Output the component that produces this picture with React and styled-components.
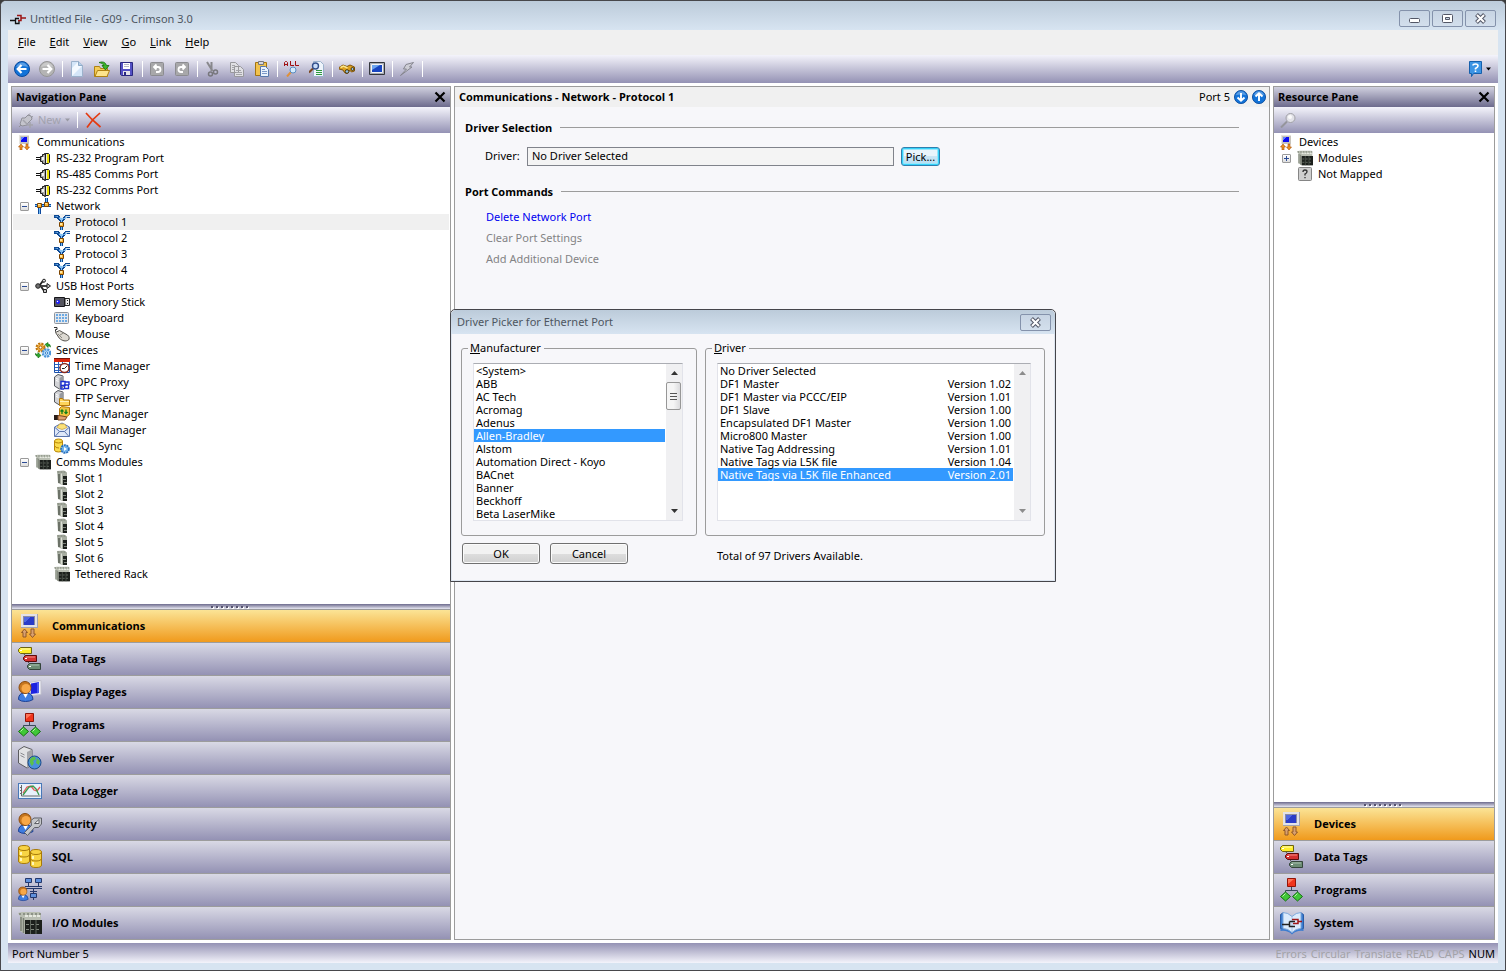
import React, { useState } from 'react';
import styled, { createGlobalStyle, css } from 'styled-components';

const GlobalStyle = createGlobalStyle`
  * {
    box-sizing: border-box;
  }

  body {
    margin: 0;
    background: #3c3c3c;
    color: #000;
    font-family: 'Noto Sans', 'Open Sans', sans-serif;
    font-size: 11px;
    line-height: 16px;
  }

  button,
  input {
    font: inherit;
    color: inherit;
  }

  svg {
    display: block;
    flex: none;
  }
`;

const barGradient = 'linear-gradient(#f4f4fb, #9492b4)';

const boldText = css`
  font-family: 'Open Sans', 'Noto Sans', sans-serif;
  font-size: 11px;
  font-weight: 700;
`;

/* ---------- window frame ---------- */

const Window = styled.div`
  position: relative;
  display: flex;
  flex-direction: column;
  min-height: 100vh;
  padding: 0 7px 7px;
  border: 1px solid #47474b;
  border-radius: 6px 6px 0 0;
  background: #d7e4f1;
`;

const TitleBar = styled.header`
  display: flex;
  align-items: center;
  height: ${(p) => p.$height}px;
  margin: ${(p) => (p.$main ? '0 -7px' : '0')};
  padding: ${(p) => (p.$main ? '6px 9px 0' : '0 4px 0 6px')};
  gap: 4px;
  border-radius: 5px 5px 0 0;
  background: linear-gradient(#bccbda, #d7e4f1);
  color: #4d5661;
`;

const WindowTitle = styled.h1`
  flex: 1;
  margin: 0;
  font-size: 11px;
  font-weight: 400;
`;

const CaptionButtons = styled.div`
  display: flex;
  gap: 2px;
`;

const CaptionButton = styled.button`
  display: flex;
  align-items: center;
  justify-content: center;
  width: 31px;
  height: 17px;
  padding: 0;
  border: 1px solid #8492ab;
  border-radius: 2px;
  background: linear-gradient(#c7d4e3, #d3dfec);
`;

const MenuBar = styled.nav`
  display: flex;
  align-items: center;
  height: 25px;
  padding: 0 0 2px 3px;
  background: #f0f0f0;
`;

const MenuItem = styled.button`
  padding: 0 7px;
  border: 0;
  background: none;

  &::first-letter {
    text-decoration: underline;
  }
`;

const Toolbar = styled.div`
  display: flex;
  align-items: center;
  height: 28px;
  padding: 0 7px 0 2px;
  background: ${barGradient};
`;

const ToolButton = styled.button`
  width: 25px;
  padding: 4px;
  border: 0;
  background: none;
`;

const ToolSeparator = styled.span`
  width: 1px;
  height: 16px;
  margin: 0 2px;
  background: #fff;
`;

const HelpButton = styled.button`
  display: flex;
  align-items: center;
  gap: 2px;
  margin-left: auto;
  padding: 0;
  border: 0;
  background: none;
`;

const Workspace = styled.main`
  flex: 1;
  display: grid;
  grid-template-columns: 440px minmax(0, 1fr) 222px;
  gap: 3px;
  padding: 3px;
  background: #fff;
`;

const StatusBar = styled.footer`
  display: flex;
  align-items: center;
  height: 20px;
  gap: 4px;
  padding: 2px 3px 0 4px;
  background: linear-gradient(#9492b4, #f4f4fb);
`;

const StatusText = styled.span`
  flex: 1;
`;

const StatusFlag = styled.span`
  color: ${(p) => (p.$on ? '#000' : '#a3a3a8')};
`;

/* ---------- panes ---------- */

const Pane = styled.section`
  display: flex;
  flex-direction: column;
  border: 1px solid #9c9c9c;
  background: #fff;
`;

const PaneHeader = styled.div`
  display: flex;
  align-items: center;
  justify-content: space-between;
  height: 20px;
  padding: 0 4px;
  background: linear-gradient(#d0d0df, #6d6b8d);
`;

const PaneTitle = styled.h2`
  margin: 0;
  ${boldText}
`;

const IconButton = styled.button`
  padding: 0;
  border: 0;
  background: none;
`;

const PaneToolbar = styled.div`
  display: flex;
  align-items: center;
  height: 26px;
  padding: 0 6px;
  gap: 5px;
  background: ${barGradient};
`;

const NewButton = styled.button`
  display: flex;
  align-items: center;
  gap: 4px;
  padding: 0;
  border: 0;
  background: none;

  &:disabled {
    color: #a2a2ae;
  }
`;

const Tree = styled.ul`
  flex: 1;
  margin: 0;
  padding: 1px 1px 0;
  list-style: none;
`;

const TreeRow = styled.li`
  display: flex;
  align-items: center;
  height: 16px;
  padding-left: ${(p) => p.$level * 19 + 3}px;
  background: ${(p) => (p.$selected ? '#f0f0f0' : 'none')};
`;

const TreeLabel = styled.span`
  margin-left: 5px;
`;

const Expander = styled.button`
  width: 9px;
  height: 9px;
  margin: 0 6px 0 -15px;
  padding: 1px;
  border: 1px solid #9a9a9a;
  border-radius: 1px;
  background: linear-gradient(#fff, #ddd);
`;

const Splitter = styled.div`
  display: flex;
  align-items: center;
  justify-content: center;
  gap: 3px;
  height: 5px;
  padding-right: 4px;
  background: linear-gradient(#6d6b8d, #e8e8f2);
`;

const Grip = styled.i`
  width: 2px;
  height: 2px;
  background: #55536f;
  box-shadow: 1px 1px 0 #fff;
`;

const CategoryButton = styled.button`
  display: flex;
  align-items: center;
  gap: 10px;
  height: 33px;
  padding: 0 6px;
  border: 0;
  border-top: 1px solid #9c9c9c;
  background: ${(p) =>
    p.$active ? 'linear-gradient(#fbe496, #f09a1c)' : 'linear-gradient(#d9d9e5, #9492b4)'};
  text-align: left;
  ${boldText}
`;

/* ---------- port editor ---------- */

const EditorHeader = styled.div`
  display: flex;
  align-items: center;
  gap: 4px;
  height: 20px;
  padding: 0 3px 0 4px;
  background: #f0f0f0;
`;

const EditorTitle = styled(PaneTitle)`
  flex: 1;
`;

const EditorBody = styled.div`
  flex: 1;
  padding: 13px 30px 0 10px;
  background: #f7f7fa;
`;

const SectionTitle = styled.h3`
  display: flex;
  align-items: center;
  gap: 8px;
  margin: 0;
  ${boldText}

  &::after {
    content: '';
    flex: 1;
    height: 1px;
    margin-bottom: 2px;
    background: #9c9c9c;
  }
`;

const DriverRow = styled.div`
  display: flex;
  align-items: center;
  margin: 11px 0 18px;
  padding-left: 20px;
`;

const DriverLabel = styled.label`
  width: 42px;
  padding-bottom: 2px;
`;

const DriverInput = styled.input`
  width: 367px;
  height: 19px;
  margin-right: 7px;
  padding: 0 4px 2px;
  border: 1px solid #80838b;
  background: #f4f4f4;
`;

const PickButton = styled.button`
  width: 39px;
  height: 19px;
  padding: 0;
  border: 1px solid #2f7fae;
  border-radius: 3px;
  box-shadow: inset 0 0 0 1px #35d3fa, inset 0 0 0 2px #9be6fb;
  background: linear-gradient(#e9f5fc 50%, #cbe6f5 50%, #b4ddf2);
`;

const Commands = styled.div`
  display: flex;
  flex-direction: column;
  align-items: flex-start;
  gap: 5px;
  padding: 9px 0 0 21px;
`;

const CommandLink = styled.a`
  color: ${(p) => (p.$disabled ? '#838385' : '#0000f0')};
  text-decoration: none;
`;

/* ---------- driver picker ---------- */

const Dialog = styled.div`
  position: absolute;
  top: 308px;
  left: calc(50% - 303px);
  width: 606px;
  border: 1px solid #45454a;
  border-radius: 5px 5px 0 0;
  background: #f7f7fa;
`;

const DialogBody = styled.div`
  display: grid;
  grid-template-columns: 236px minmax(0, 1fr);
  gap: 7px 8px;
  padding: 6px 9px 16px;
  border: 1px solid #dfe7f1;
  border-top: 0;
`;

const Group = styled.fieldset`
  min-width: 0;
  margin: 0;
  padding: 0 0 14px;
  border: 1px solid #9c9c9c;
  border-radius: 3px;
`;

const Legend = styled.legend`
  margin-left: 6px;
  padding: 0 3px 0 2px;

  &::first-letter {
    text-decoration: underline;
  }
`;

const ListFrame = styled.div`
  display: flex;
  height: 158px;
  margin: 7px 13px 0 11px;
  border: 1px solid #e2e3ea;
  border-top-color: #abadb3;
  background: #fff;
`;

const List = styled.ul`
  flex: 1;
  margin: 0;
  padding: 0;
  overflow: hidden;
  list-style: none;
  line-height: 13px;
`;

const Option = styled.li`
  display: flex;
  justify-content: space-between;
  padding: 0 2px;
  cursor: default;
  ${(p) =>
    p.$selected &&
    css`
      background: #3399ff;
      color: #fff;
    `}
`;

const ScrollBar = styled.div`
  display: flex;
  flex-direction: column;
  width: 16px;
  margin-left: 1px;
  background: #f0f0f2;
`;

const ScrollArrow = styled.button`
  display: flex;
  align-items: center;
  justify-content: center;
  height: 18px;
  padding: 0;
  border: 0;
  background: none;
`;

const ScrollTrack = styled.div`
  flex: 1;
`;

const Thumb = styled.div`
  display: flex;
  align-items: center;
  justify-content: center;
  height: 28px;
  margin: 0 1px 0 0;
  border: 1px solid #979797;
  border-radius: 2px;
  background: linear-gradient(90deg, #f5f5f5 50%, #dcdcde);
`;

const DialogActions = styled.div`
  display: flex;
  gap: 10px;
  padding-left: 1px;
`;

const DialogButton = styled.button`
  width: 78px;
  height: 21px;
  padding: 0;
  border: 1px solid #707070;
  border-radius: 3px;
  box-shadow: inset 0 0 0 1px #fbfbfb;
  background: linear-gradient(#f2f2f2 50%, #dedede 50%, #d0d0d0);
`;

const DriverCount = styled.p`
  margin: 5px 0 0 12px;
`;

/* ---------- icons ---------- */

const Icon = ({ size = 16, w, h, box, children }) => (
  <svg
    width={w || size}
    height={h || size}
    viewBox={box || `0 0 ${w || size} ${h || size}`}
    aria-hidden='true'
  >
    {children}
  </svg>
);

const CommIcon = () => (
  <Icon>
    <path d='M3 1h10v9H3z' fill='#c8c4bc' />
    <path d='M3 1h10v1H4v8H3z' fill='#e6e4de' />
    <path d='M5 3h6v5H5z' fill='#0c0cf0' />
    <path d='M5 3h3v1H7v1H6v1H5z' fill='#6482ff' />
    <path d='M5 10l2.500 3H6v3H4v-3H2.500zM11 16l-2.500-3H10v-3h2v3h1.500z' fill='#ee9020' stroke='#a8500c' strokeWidth='.6' />
  </Icon>
);

const SerialIcon = () => (
  <Icon>
    <path d='M1 7.500h5M1 9.500h5' stroke='#111' />
    <path d='M5.500 6.500h2v-2h2v-1h1v11h-1v-1h-2v-2h-2z' fill='#a9a9a9' stroke='#1c1c1c' />
    <path d='M7 7h2v3H7z' fill='#f4f4f4' />
    <path d='M10.500 3.500h3l1 1v8l-1 1h-3z' fill='#e8e8e8' stroke='#1c1c1c' />
    <path d='M12 4h2v9h-2z' fill='#ece000' />
  </Icon>
);

const NetworkIcon = () => (
  <Icon>
    <path d='M0 7.500h16M4.500 9v7M11.500 0v6' stroke='#0c489c' strokeWidth='3' />
    <path d='M0 7.500h16M4.500 9v7M11.500 0v6' stroke='#74baf4' strokeWidth='1' />
    <path d='M2.500 5.500h4v4h-4zM9.500 4.500h4v4h-4z' fill='#fcb83c' stroke='#7c4400' />
    <path d='M3 6h2v1H3zM10 5h2v1h-2z' fill='#ffe9a8' />
  </Icon>
);

const ProtocolIcon = () => (
  <Icon>
    <path d='M0 1h5v1h1v2h1v1h2V3h1V2h1V1h5v3h-4v1h-1v1h-1v1H9v2H6V7H5V6H4V5H3V4H0z' fill='#0c4894' />
    <path d='M0 2h4v1h1v2h1v1h1v2h1V6h1V5h1V4h1V3h1V2h4v1h-3v1h-1v1' fill='#86c2f4' />
    <path d='M11 2h5v1h-4z' fill='#d4e4f0' />
    <path d='M6 13h3v3H6z' fill='#0c4894' />
    <path d='M7 13h1v3H7z' fill='#74baf4' />
    <path d='M5.500 8.500h4v4h-4z' fill='#fcb83c' stroke='#7c4400' />
    <path d='M6 9h2v2H6z' fill='#ffe9a8' />
  </Icon>
);

const UsbIcon = () => (
  <Icon>
    <path d='M3 8h10M4.500 7.500l3-4H9M6 8.500l2.500 3.500h2' fill='none' stroke='#222' strokeWidth='1.800' />
    <path d='M4 8h8' stroke='#999' strokeWidth='.6' />
    <circle cx='3' cy='8' r='2.300' fill='#707070' stroke='#222' />
    <circle cx='9' cy='2.700' r='1.500' fill='#ddd' stroke='#222' />
    <path d='M12 5.500L15.500 8 12 10.500zM8.500 11.500h3v3h-3z' fill='#c4c4c4' stroke='#222' />
  </Icon>
);

const MemoryIcon = () => (
  <Icon>
    <path d='M.5 3.500h10v9H.5z' fill='#55555e' stroke='#16161a' />
    <path d='M11 4.500h4.500v7H11z' fill='#eee' stroke='#222' />
    <path d='M13 6h1v1h-1zM13 9h1v1h-1z' fill='#222' />
    <circle cx='4' cy='8' r='2' fill='#1b1bff' />
    <circle cx='3.500' cy='7.500' r='.7' fill='#fff' />
  </Icon>
);

const KeyboardIcon = () => (
  <Icon>
    <rect x='.5' y='2.500' width='14' height='11' rx='1' fill='#e4e7ec' stroke='#8e959e' />
    <path d='M2 5h11M2 8h11M2 11h11' stroke='#6caae4' strokeWidth='2' strokeDasharray='2 1' />
  </Icon>
);

const MouseIcon = () => (
  <Icon>
    <path d='M0 1.500h3v2H1.500v2l2 2' fill='none' stroke='#333' />
    <path d='M1.500 6.500l4-2 8 4.500c2 1.500 2 4 1 5-3 1.800-6 .8-9-1.500z' fill='#dcd9d2' stroke='#55534e' />
    <path d='M6 9l3.500-2M4 8l4 4' stroke='#8b8982' />
  </Icon>
);

const GearsIcon = () => (
  <Icon>
    <circle cx='5.500' cy='5.500' r='3.500' fill='#f6c35c' stroke='#c0760e' strokeWidth='3' strokeDasharray='2 .8' />
    <circle cx='5.500' cy='5.500' r='3' fill='#f2b040' />
    <circle cx='5.500' cy='5.500' r='1.500' fill='#fff' stroke='#a8600c' />
    <circle cx='11.500' cy='11' r='3.500' fill='#a8d4f8' stroke='#4c94d8' strokeWidth='2.600' strokeDasharray='2 .8' />
    <circle cx='11.500' cy='11' r='2.500' fill='#bce0fc' />
    <circle cx='11.500' cy='11' r='1.200' fill='#fff' stroke='#3b82c8' />
    <path d='M10 2.500l3-2v1.500q2.500 0 2.500 3-1-1.500-2.500-1v1.500zM6 13.500l-3 2.500v-1.500Q.5 14 0 11.500q1.500 1 3 .5v-1.500z' fill='#2ea52e' stroke='#0b6a0b' strokeWidth='.6' />
  </Icon>
);

const TimeIcon = () => (
  <Icon>
    <path d='M.5 1.500h15v13H.5z' fill='#fff' stroke='#1a4fa8' />
    <path d='M1 6.500h14M1 9.500h14M1 12.500h14M4.500 4v10M8.500 4v10' stroke='#2a62c0' />
    <path d='M0 0h16v4H0z' fill='#d8260e' />
    <path d='M0 0h16v1H0z' fill='#7c1408' />
    <circle cx='10.500' cy='10' r='4.500' fill='#fff' stroke='#8c2a1c' strokeWidth='1.400' />
    <path d='M10.500 10.500L13 8M10.500 10.500H8' fill='none' stroke='#222' />
  </Icon>
);

const ServerShape = () => (
  <>
    <path d='M.5 3L4 .5l5 1.500v11l-3.500 2L.5 12z' fill='#d2d3d6' stroke='#55575c' />
    <path d='M5.500 4L9 2v11l-3.500 2z' fill='#96999f' />
    <path d='M2 4.500l2.500.8M2 6.500l2.500.8' stroke='#fff' />
  </>
);

const OpcIcon = () => (
  <Icon>
    <ServerShape />
    <path d='M7 7.500h4v4H7zM10.500 11h4v3.500h-4z' fill='#fff' stroke='#1c2fd0' strokeWidth='1.400' />
    <path d='M11 8h4v3M7 12v3h3' fill='none' stroke='#1c2fd0' strokeWidth='1.400' />
  </Icon>
);

const FtpIcon = () => (
  <Icon>
    <ServerShape />
    <path d='M5.500 8.500h3l1 1.500h6v5.500h-10z' fill='#ffd45a' stroke='#b4780c' />
    <path d='M6 11.500h9' stroke='#fff0b8' />
  </Icon>
);

const SyncIcon = () => (
  <Icon>
    <path d='M5.500 2.500l2-2 8 1v7l-3 2.500h-7z' fill='#f2c440' stroke='#b4760c' />
    <path d='M8 8V4M6.500 5.500L8 4l1.500 1.500M12 3.500v4M10.500 6l1.500 1.500L13.500 6' fill='none' stroke='#11801a' strokeWidth='1.300' />
    <path d='M0 9h4v5H0z' fill='#2a1c18' />
    <path d='M4 9.500l4 .5 5 1-2 3H4z' fill='#e0a070' stroke='#7d4a22' />
  </Icon>
);

const MailIcon = () => (
  <Icon>
    <path d='M.5 5L8 1l7.500 4v9.500H.5z' fill='#dfe8f8' stroke='#5a75ad' />
    <path d='M3 5.500L5.500 2h5L13 5.500l-5 2z' fill='#fbe27a' stroke='#caa036' strokeWidth='.7' />
    <path d='M1 5.500l4.500 4h5l4.500-4M1 14.500l4.500-5M15 14.500l-4.500-5' fill='none' stroke='#5a75ad' />
  </Icon>
);

const SqlSyncIcon = () => (
  <Icon>
    <path d='M.5 3q0-2 4-2t4 2v9q0 2-4 2t-4-2z' fill='#fadb4c' stroke='#b98608' />
    <path d='M.5 3q0 2 4 2t4-2M1 8q0 2 4 2' fill='none' stroke='#b98608' />
    <circle cx='11' cy='11' r='3.800' fill='#8cc4f4' stroke='#2a70bc' strokeWidth='2' strokeDasharray='2 .7' />
    <circle cx='11' cy='11' r='3' fill='#6cb0ec' />
    <path d='M10 9l3 2-3 2z' fill='#fff' />
  </Icon>
);

const RackIcon = ({ size = 16 }) => (
  <Icon w={size} h={size} box='0 0 24 24'>
    <path d='M0 2l4-1 18 0 1 4v18H7l-5-3V5z' fill='#b9beb2' />
    <path d='M1 3h22' stroke='#8c9286' strokeWidth='2' strokeDasharray='2 2' />
    <path d='M3 6v14M5.500 7v15' stroke='#7c8276' strokeWidth='1.500' />
    <path d='M7 5h16' stroke='#e6e9e0' strokeWidth='2' strokeDasharray='3 1' />
    <path d='M7 9h17v14H7z' fill='#1c201c' />
    <path d='M8 13.500h15M8 18.500h15' stroke='#7e867c' strokeDasharray='3 2' />
    <path d='M12.500 9v14M18 9v14' stroke='#5c645a' />
  </Icon>
);

const SlotIcon = () => (
  <Icon>
    <path d='M3 1l7-.5 3 2V15H8l-4-2z' fill='#a8aea2' />
    <path d='M3.500 2h8' stroke='#7c8276' strokeDasharray='2 1' />
    <path d='M5 4v9' stroke='#6c7268' strokeWidth='2' />
    <path d='M7.500 3.500v11' stroke='#dcdfd6' />
    <path d='M9 6h4v9H9z' fill='#1c201c' />
    <path d='M9 9.500h3M10 12.500h3' stroke='#7e847c' />
  </Icon>
);

const UnknownIcon = () => (
  <Icon>
    <rect x='1.500' y='1.500' width='13' height='13' rx='1' fill='#cfcfcf' stroke='#858585' />
    <path d='M6 6q0-2 2-2t2 1.700Q10 7 8 8v1.500M8 11v1.300' fill='none' stroke='#333' strokeWidth='1.300' />
  </Icon>
);

const BigCommIcon = () => (
  <Icon size={24}>
    <path d='M3 0h17v14H3z' fill='#a4a4ae' />
    <path d='M3 0h16v13H3z' fill='#e2e2e8' />
    <path d='M5 2h12v9H5z' fill='#8c8ca0' />
    <path d='M6 3h10v8H6z' fill='#2a3cc8' />
    <path d='M6 3h6v1h-1v1h-1v1H9v1H8v1H6z' fill='#5068e0' />
    <path d='M6.500 15l3 3.500H8V23H5v-4.500H3.500zM14.500 23.500l-3-3.500H13v-5h3v5h1.500z' fill='#d8a070' stroke='#905828' />
  </Icon>
);

const TagsIcon = () => (
  <Icon size={24}>
    <path d='M3 3.500l5 6M8 12.500l5 6' stroke='#555' />
    <path d='M.5 2.500l2-2h11v6h-11l-2-2z' fill='#ffee2a' stroke='#6c6410' />
    <path d='M5.500 10.500l2-2h11v6h-11l-2-2z' fill='#d43030' stroke='#5c0c0c' />
    <path d='M9.500 18.500l2-2h11v6h-11l-2-2z' fill='#6c8c74' stroke='#34443a' />
    <path d='M3 2h9' stroke='#fffbc0' />
    <path d='M8 10h9' stroke='#f48c84' />
    <path d='M12 18h9' stroke='#a8c0ae' />
    <path d='M2 3h2v1H2zM7 11h2v1H7zM11 19h2v1h-2z' fill='#fff' />
  </Icon>
);

const PersonShape = () => (
  <>
    <path d='M.5 19.500q0-6 5-6.500h4q5 .5 5.500 6.500-3 2-7.500 2t-7-2z' fill='#3f7de0' stroke='#1a3f94' />
    <path d='M5 13.500l2.500 4.500 2.500-4.500z' fill='#fff' />
    <circle cx='7' cy='7.500' r='6' fill='#c87820' stroke='#8c4a0c' />
    <circle cx='8' cy='8.500' r='4.500' fill='#f8a848' />
  </>
);

const DisplayIcon = () => (
  <Icon size={24}>
    <path d='M11 2.500l12-2v14l-10 1z' fill='#f2f2f8' stroke='#c0c0cc' />
    <path d='M13 3.500l8-1.500v11l-8 1z' fill='#1c22e0' />
    <path d='M19 3l2-1v11l-2 .3z' fill='#4a58f0' />
    <PersonShape />
  </Icon>
);

const ProgramsIcon = () => (
  <Icon size={24}>
    <path d='M11.500 9v3.500M5.500 16v-3.500h12V16' fill='none' stroke='#3c4a5c' />
    <path d='M7.500 .500h8v8h-8z' fill='#f0341c' stroke='#921408' />
    <path d='M8 1h6L8 6z' fill='#ff7458' />
    <path d='M5.500 14l5 4.500-5 4.500-5-4.500zM17.500 14l5 4.500-5 4.500-5-4.500z' fill='#40c838' stroke='#147012' />
    <path d='M5.500 15.500l-3 3M17.500 15.500l-3 3' stroke='#b8f4a8' />
  </Icon>
);

const WebIcon = () => (
  <Icon size={24}>
    <path d='M.5 4L6 .500l8 3V19l-5 3-8.500-5z' fill='#e2e2e4' stroke='#5c5c60' />
    <path d='M9 6l5-2.500V19l-5 3z' fill='#a4a4a8' />
    <path d='M2.500 7l4 2M2.500 9.500l4 2' stroke='#8b8b90' />
    <circle cx='16.500' cy='16.500' r='6.500' fill='#4a90dc' stroke='#1a4c88' />
    <path d='M12 13q3-3 5-2l1 2-3 2 1 2-2 3q-3-3-2-7zM19 12l3 3-1 4-3-2z' fill='#5cc04a' />
  </Icon>
);

const LoggerIcon = () => (
  <Icon size={24}>
    <rect x='.5' y='4.500' width='23' height='15' fill='#e8f1fc' stroke='#4878b8' />
    <path d='M3.500 6v11h19M2 8.500h2M2 11.500h2M2 14.500h2' stroke='#666' fill='none' />
    <path d='M5 14l4-6 4-1 3 4 3 1 3-4' fill='none' stroke='#e45858' strokeWidth='1.300' />
    <path d='M5 16l3-4 3-4 4-1 3 3 3 6' fill='none' stroke='#3a9a4c' strokeWidth='1.300' />
  </Icon>
);

const SecurityIcon = () => (
  <Icon size={24}>
    <PersonShape />
    <path d='M6.500 20.500l7-7-.5-5 3-2.500h7.500v6l-3 3.500h-4l-7 8z' fill='#c4c6ca' stroke='#5e6066' />
    <path d='M16.500 11.500l4.500-4v4z' fill='#f8f8f8' stroke='#5e6066' />
  </Icon>
);

const SqlIcon = () => (
  <Icon size={24}>
    {[[0, 0], [12, 4]].map(([x, y]) => (
      <g key={x} transform={`translate(${x} ${y})`}>
        <path d='M.5 3q0-2.500 5.500-2.500T11.500 3v13q0 2.500-5.500 2.500T.5 16z' fill='#f8d444' stroke='#a87a08' />
        <path d='M.5 3Q1 5.500 6 5.500T11.500 3M.5 9.500Q1 12 6 12t5.500-2.500' fill='none' stroke='#a87a08' />
        <path d='M3 7v3M3 13v3' stroke='#fff6b8' strokeWidth='2' />
      </g>
    ))}
  </Icon>
);

const ControlIcon = () => (
  <Icon size={24}>
    <path d='M7.500 .500h6v4h-6zM17.500 .500h6v4h-6zM12.500 15.500h6v4h-6z' fill='#5f90dc' stroke='#24386c' />
    <path d='M10.500 5v3M20.500 5v3M7 8.500h17M7 10.500h17M15.500 11v4M12 13.500h7M15.500 20v2' stroke='#24386c' fill='none' />
    <g transform='translate(0 8) scale(.68)'>
      <PersonShape />
    </g>
  </Icon>
);

const SystemIcon = () => (
  <Icon size={24}>
    <path d='M.5 3.500l3-2v17l-3-1zM23.500 3.500l-3-2v17l3-1z' fill='#3c7cd0' stroke='#2a5ca4' />
    <path d='M.5 18q7-1 11.500 4 4.500-5 11.500-4v2q-7-1-11.500 3.500Q7.500 19 .5 20z' fill='#3c7cd0' />
    <path d='M3 1.500q5 0 9 4 4-4 9-4v16q-5 0-9 4-4-4-9-4z' fill='#dcebfc' stroke='#7ca8dc' />
    <path d='M12 6v15' stroke='#a8c8ec' />
    <path d='M2 13.500h7M9.500 10.500H15M9.500 10.500v5H15' fill='none' stroke='#222' strokeWidth='1.500' />
    <path d='M12 8.500h6v4h-5M18 10.500h4' fill='none' stroke='#a01818' strokeWidth='1.500' />
  </Icon>
);

const CrimsonLogo = () => (
  <Icon>
    <path d='M0 9.500h5M9 7.500H5.500v5H9V9.500' fill='none' stroke='#111' strokeWidth='1.300' />
    <path d='M7 4.500h4v5H8M11 7h5' fill='none' stroke='#9c1414' strokeWidth='1.500' />
  </Icon>
);

const ArrowDisc = ({ size = 16, turn = 0, off }) => (
  <Icon w={size} h={size} box='0 0 16 16'>
    <circle cx='8' cy='8' r='7.500' fill={off ? '#b4b4b4' : '#1373d8'} stroke={off ? '#969696' : '#0a4a9c'} />
    <path d='M2 6q2-4.500 6-4.500T14 6q-6-2-12 0z' fill='#fff' opacity='.3' />
    <path
      d='M12.500 8H4M7.500 4L3.700 8l3.800 4'
      fill='none'
      stroke='#fff'
      strokeWidth='2.200'
      transform={`rotate(${turn} 8 8)`}
    />
  </Icon>
);

const NewFileIcon = () => (
  <Icon>
    <path d='M2.500 .500h7l4 4v11h-11z' fill='#d4e5f8' stroke='#9cb2cc' />
    <path d='M3 15V7l6-6v4h4z' fill='#f4f9ff' />
    <path d='M9.500 .500v4h4' fill='#b4cee8' stroke='#8fa9c6' />
  </Icon>
);

const OpenIcon = () => (
  <Icon>
    <path d='M.5 5.500h5l1 2h7v8H.5z' fill='#f4cc58' stroke='#b08212' />
    <path d='M1 15.500l2.500-6h12l-2.500 6z' fill='#fde48c' stroke='#b08212' />
    <path d='M5 1.500q6-2 7.500 3h2.500L11.500 9 8 4.500h2Q9 2 5 1.500z' fill='#3db52c' stroke='#14700c' strokeWidth='.8' />
  </Icon>
);

const SaveIcon = () => (
  <Icon>
    <path d='M1.500 1.500h12v13h-11l-1-1z' fill='#5350c4' stroke='#2a2880' />
    <path d='M4 2h7v6H4z' fill='#fff' />
    <path d='M5 3.500h5M5 5.500h5' stroke='#b4b4c4' />
    <path d='M4 10h7v4H4z' fill='#e4e4ea' />
    <path d='M5 11h2v3H5z' fill='#2a2880' />
  </Icon>
);

const UndoIcon = ({ flip }) => (
  <Icon>
    <rect x='1.500' y='1.500' width='13' height='13' rx='1' fill='#a8a8aa' stroke='#8c8c90' />
    <path
      d='M5 6h4q2.500 0 2.500 2.500T9 11H7M7.500 3.500L5 6l2.500 2.500'
      fill='none'
      stroke='#fff'
      strokeWidth='1.800'
      transform={flip ? 'translate(16 0) scale(-1 1)' : undefined}
    />
  </Icon>
);

const CutIcon = () => (
  <Icon>
    <path d='M3 1l5.500 9M7.500 1v9' stroke='#88888c' strokeWidth='2' />
    <circle cx='6.500' cy='13' r='2' fill='none' stroke='#77777c' strokeWidth='1.500' />
    <circle cx='11.500' cy='11' r='2' fill='none' stroke='#77777c' strokeWidth='1.500' />
  </Icon>
);

const CopyIcon = () => (
  <Icon>
    <path d='M1.500 1.500h5l3 3v7h-8zM5.500 5.500h6l3 3v7h-9z' fill='#e0e0e4' stroke='#98989c' />
    <path d='M3 4.500h3M3 6.500h2M3 8.500h2M7 9.500h5M7 11.500h6M7 13.500h6' stroke='#a4a4a8' />
  </Icon>
);

const PasteIcon = () => (
  <Icon>
    <path d='M1.500 1.500h11v13h-11z' fill='#f2c24c' stroke='#a47410' />
    <path d='M4.500 .500h5v3h-5z' fill='#d8d8de' stroke='#77777c' />
    <path d='M6.500 5.500h5l3 3v7h-8z' fill='#eaf2fc' stroke='#5878ac' />
    <path d='M8 8.500h3M8 10.500h5M8 12.500h5' stroke='#7c98c8' />
  </Icon>
);

const FindAllIcon = () => (
  <Icon>
    <path
      d='M.5 5V1.500l1-1h1l1 1V5M.5 3.500h3M6.500 0v4.500H10M11.500 0v4.500H15'
      fill='none'
      stroke='#a01010'
    />
    <path d='M3 15.500l4-4.500' stroke='#e09038' strokeWidth='2' />
    <circle cx='9' cy='9' r='3' fill='#d4ecfc' stroke='#5a8cc0' />
  </Icon>
);

const FindTextIcon = () => (
  <Icon>
    <path d='M4.500 .500h7l3 3v12h-10z' fill='#eef4fb' stroke='#9cb2cc' />
    <path d='M7 9.500h6M7 11.500h6M7 13.500h6' stroke='#2c9a3c' />
    <path d='M0 11.500l4-4' stroke='#7a4620' strokeWidth='2' />
    <circle cx='6.500' cy='5' r='3' fill='#c8dcf8' stroke='#34508c' strokeWidth='1.400' />
  </Icon>
);

const BinocularsIcon = () => (
  <Icon>
    <path d='M0 6.500L4 4l4 1.500L11 4l4.500 2v4l-3 1-2-2-1 2.500q-2 2-4 0L4 9 0 8z' fill='#dca020' stroke='#80540a' />
    <path d='M1.500 6.500l3-1.500 4 2' fill='none' stroke='#fbe68c' strokeWidth='1.500' />
    <circle cx='8' cy='10.500' r='1.800' fill='#8cc0ec' stroke='#4c3404' />
    <circle cx='13.500' cy='8' r='1.500' fill='#8cc0ec' stroke='#4c3404' />
  </Icon>
);

const ScreenIcon = () => (
  <Icon>
    <path d='M.5 1.500h15v12H.5z' fill='#a8acb4' stroke='#33363c' />
    <path d='M2.500 3.500h11v8h-11z' fill='#1744c0' stroke='#f4f4f4' />
    <path d='M3 4h8l-8 5z' fill='#6ca4f0' />
  </Icon>
);

const BoltIcon = () => (
  <Icon>
    <path d='M7 3.500l7.500-2-4 4.500h2.500L1.500 14.500 7.500 8H4.500z' fill='#ceced6' stroke='#85858e' />
  </Icon>
);

const HelpIcon = () => (
  <Icon>
    <path d='M1.500 .500h12v12h-8l-2 3v-3h-2z' fill='#3c94e4' stroke='#1660ac' />
    <path d='M5 4.500Q5 3 7.500 3T10 5q0 1-2.500 2.500v1M7.500 9.500V11' fill='none' stroke='#fff' strokeWidth='1.600' />
  </Icon>
);

const PlugIcon = () => (
  <Icon>
    <path d='M2 12l2-6 3 0 3-3 3 1 1 3-4 4-1 2-5 1zM1 15l2-2M12 1.500l-2 2M15 4.500l-2 1' fill='#c4c4cc' stroke='#909098' />
    <path d='M5 8l4 4M12 10v6M9 13h6' stroke='#a4a4ac' strokeWidth='1.500' />
  </Icon>
);

const DeleteIcon = () => (
  <Icon>
    <path d='M1 1l6 6.500L15.500 15M15 1L8 7.500 2 15.500' fill='none' stroke='#e43a10' strokeWidth='1.700' />
  </Icon>
);

const SearchIcon = () => (
  <Icon>
    <path d='M1 15.500l6-6' stroke='#95959c' strokeWidth='2' />
    <circle cx='10.500' cy='6' r='4.500' fill='#e2e2e8' stroke='#a0a0a6' />
    <circle cx='10' cy='5' r='2' fill='#fafafa' />
  </Icon>
);

const CloseGlyph = () => (
  <Icon w={12} h={12}>
    <path d='M1.500 1.500l9 9M10.500 1.500l-9 9' stroke='#000' strokeWidth='2.200' />
  </Icon>
);

const Minimize = () => (
  <Icon w={13} h={11}>
    <rect x='1.500' y='5.500' width='10' height='4' rx='1' fill='#fff' stroke='#535766' />
  </Icon>
);

const Maximize = () => (
  <Icon w={13} h={11}>
    <rect x='1.500' y='1.500' width='10' height='8' rx='1' fill='#fff' stroke='#535766' />
    <path d='M4.500 4.500h4v2h-4z' fill='#c7d4e3' stroke='#535766' />
  </Icon>
);

const CloseCaption = () => (
  <Icon w={13} h={11}>
    <path d='M2.500 1.500l8 8M10.500 1.500l-8 8' stroke='#535766' strokeWidth='4' />
    <path d='M3 2l7 7M10 2L3 9' stroke='#fff' strokeWidth='2' />
  </Icon>
);

const Triangle = ({ up, color = '#222', w = 7 }) => (
  <Icon w={w} h={4} box='0 0 7 4'>
    <path d={up ? 'M0 4L3.500 0 7 4z' : 'M0 0h7L3.500 4z'} fill={color} />
  </Icon>
);

/* ---------- data ---------- */

const toolGroups = [
  [
    ['Back', <ArrowDisc />],
    ['Forward', <ArrowDisc turn={180} off />]
  ],
  [
    ['New', <NewFileIcon />],
    ['Open', <OpenIcon />],
    ['Save', <SaveIcon />]
  ],
  [
    ['Undo', <UndoIcon />],
    ['Redo', <UndoIcon flip />]
  ],
  [
    ['Cut', <CutIcon />],
    ['Copy', <CopyIcon />],
    ['Paste', <PasteIcon />]
  ],
  [
    ['Find all', <FindAllIcon />],
    ['Find text', <FindTextIcon />]
  ],
  [['Search', <BinocularsIcon />]],
  [['Display', <ScreenIcon />]],
  [['Download', <BoltIcon />]]
];

const navTree = [
  { level: 0, label: 'Communications', icon: CommIcon },
  { level: 1, label: 'RS-232 Program Port', icon: SerialIcon },
  { level: 1, label: 'RS-485 Comms Port', icon: SerialIcon },
  { level: 1, label: 'RS-232 Comms Port', icon: SerialIcon },
  { level: 1, label: 'Network', icon: NetworkIcon, toggle: '-' },
  { level: 2, label: 'Protocol 1', icon: ProtocolIcon },
  { level: 2, label: 'Protocol 2', icon: ProtocolIcon },
  { level: 2, label: 'Protocol 3', icon: ProtocolIcon },
  { level: 2, label: 'Protocol 4', icon: ProtocolIcon },
  { level: 1, label: 'USB Host Ports', icon: UsbIcon, toggle: '-' },
  { level: 2, label: 'Memory Stick', icon: MemoryIcon },
  { level: 2, label: 'Keyboard', icon: KeyboardIcon },
  { level: 2, label: 'Mouse', icon: MouseIcon },
  { level: 1, label: 'Services', icon: GearsIcon, toggle: '-' },
  { level: 2, label: 'Time Manager', icon: TimeIcon },
  { level: 2, label: 'OPC Proxy', icon: OpcIcon },
  { level: 2, label: 'FTP Server', icon: FtpIcon },
  { level: 2, label: 'Sync Manager', icon: SyncIcon },
  { level: 2, label: 'Mail Manager', icon: MailIcon },
  { level: 2, label: 'SQL Sync', icon: SqlSyncIcon },
  { level: 1, label: 'Comms Modules', icon: RackIcon, toggle: '-' },
  { level: 2, label: 'Slot 1', icon: SlotIcon },
  { level: 2, label: 'Slot 2', icon: SlotIcon },
  { level: 2, label: 'Slot 3', icon: SlotIcon },
  { level: 2, label: 'Slot 4', icon: SlotIcon },
  { level: 2, label: 'Slot 5', icon: SlotIcon },
  { level: 2, label: 'Slot 6', icon: SlotIcon },
  { level: 2, label: 'Tethered Rack', icon: RackIcon }
];

const resourceTree = [
  { level: 0, label: 'Devices', icon: CommIcon },
  { level: 1, label: 'Modules', icon: RackIcon, toggle: '+' },
  { level: 1, label: 'Not Mapped', icon: UnknownIcon }
];

const navCategories = [
  ['Communications', <BigCommIcon />],
  ['Data Tags', <TagsIcon />],
  ['Display Pages', <DisplayIcon />],
  ['Programs', <ProgramsIcon />],
  ['Web Server', <WebIcon />],
  ['Data Logger', <LoggerIcon />],
  ['Security', <SecurityIcon />],
  ['SQL', <SqlIcon />],
  ['Control', <ControlIcon />],
  ['I/O Modules', <RackIcon size={24} />]
];

const resourceCategories = [
  ['Devices', <BigCommIcon />],
  ['Data Tags', <TagsIcon />],
  ['Programs', <ProgramsIcon />],
  ['System', <SystemIcon />]
];

const manufacturers = [
  '<System>',
  'ABB',
  'AC Tech',
  'Acromag',
  'Adenus',
  'Allen-Bradley',
  'Alstom',
  'Automation Direct - Koyo',
  'BACnet',
  'Banner',
  'Beckhoff',
  'Beta LaserMike'
];

const drivers = [
  ['No Driver Selected', ''],
  ['DF1 Master', 'Version 1.02'],
  ['DF1 Master via PCCC/EIP', 'Version 1.01'],
  ['DF1 Slave', 'Version 1.00'],
  ['Encapsulated DF1 Master', 'Version 1.00'],
  ['Micro800 Master', 'Version 1.00'],
  ['Native Tag Addressing', 'Version 1.01'],
  ['Native Tags via L5K file', 'Version 1.04'],
  ['Native Tags via L5K file Enhanced', 'Version 2.01']
];

/* ---------- parts ---------- */

const TreeView = ({ label, items, initial }) => {
  const [selected, setSelected] = useState(initial);

  return (
    <Tree role='tree' aria-label={label}>
      {items.map(({ level, label, icon: NodeIcon, toggle }) => (
        <TreeRow
          key={label}
          role='treeitem'
          aria-selected={label === selected}
          $level={level}
          $selected={label === selected}
          onClick={() => setSelected(label)}
        >
          {toggle && (
            <Expander aria-label={`Toggle ${label}`}>
              <Icon w={5} h={5}>
                <path d={toggle === '+' ? 'M0 2.500h5M2.500 0v5' : 'M0 2.500h5'} stroke='#2c4c94' />
              </Icon>
            </Expander>
          )}
          <NodeIcon />
          <TreeLabel>{label}</TreeLabel>
        </TreeRow>
      ))}
    </Tree>
  );
};

const Categories = ({ items }) => {
  const [active, setActive] = useState(items[0][0]);

  return (
    <>
      <Splitter>
        {[...Array(8)].map((_, i) => (
          <Grip key={i} />
        ))}
      </Splitter>
      {items.map(([label, icon]) => (
        <CategoryButton key={label} $active={label === active} onClick={() => setActive(label)}>
          {icon}
          {label}
        </CategoryButton>
      ))}
    </>
  );
};

const ListScroll = ({ disabled }) => (
  <ScrollBar>
    <ScrollArrow aria-label='Scroll up' disabled={disabled}>
      <Triangle up color={disabled ? '#8c8c8c' : '#333'} />
    </ScrollArrow>
    <ScrollTrack>
      {!disabled && (
        <Thumb>
          <Icon w={7} h={9}>
            <path d='M0 1.500h7M0 4.500h7M0 7.500h7' stroke='#555' />
          </Icon>
        </Thumb>
      )}
    </ScrollTrack>
    <ScrollArrow aria-label='Scroll down' disabled={disabled}>
      <Triangle color={disabled ? '#8c8c8c' : '#333'} />
    </ScrollArrow>
  </ScrollBar>
);

const DriverPicker = ({ onClose }) => {
  const [manufacturer, setManufacturer] = useState('Allen-Bradley');
  const [driver, setDriver] = useState('Native Tags via L5K file Enhanced');

  return (
    <Dialog role='dialog' aria-label='Driver Picker for Ethernet Port'>
      <TitleBar $height={24}>
        <WindowTitle as='h2'>Driver Picker for Ethernet Port</WindowTitle>
        <CaptionButton aria-label='Close dialog' onClick={onClose}>
          <CloseCaption />
        </CaptionButton>
      </TitleBar>
      <DialogBody>
        <Group>
          <Legend>Manufacturer</Legend>
          <ListFrame>
            <List role='listbox' aria-label='Manufacturer'>
              {manufacturers.map((name) => (
                <Option
                  key={name}
                  role='option'
                  aria-selected={name === manufacturer}
                  $selected={name === manufacturer}
                  onClick={() => setManufacturer(name)}
                >
                  {name}
                </Option>
              ))}
            </List>
            <ListScroll />
          </ListFrame>
        </Group>
        <Group>
          <Legend>Driver</Legend>
          <ListFrame>
            <List role='listbox' aria-label='Driver'>
              {drivers.map(([name, version]) => (
                <Option
                  key={name}
                  role='option'
                  aria-selected={name === driver}
                  $selected={name === driver}
                  onClick={() => setDriver(name)}
                >
                  <span>{name}</span>
                  <span>{version}</span>
                </Option>
              ))}
            </List>
            <ListScroll disabled />
          </ListFrame>
        </Group>
        <DialogActions>
          <DialogButton onClick={onClose}>OK</DialogButton>
          <DialogButton onClick={onClose}>Cancel</DialogButton>
        </DialogActions>
        <DriverCount>Total of 97 Drivers Available.</DriverCount>
      </DialogBody>
    </Dialog>
  );
};

const App = () => {
  const [pickerOpen, setPickerOpen] = useState(true);

  return (
    <>
      <GlobalStyle />
      <Window>
        <TitleBar $main $height={29}>
          <CrimsonLogo />
          <WindowTitle>Untitled File - G09 - Crimson 3.0</WindowTitle>
          <CaptionButtons>
            <CaptionButton aria-label='Minimize'>
              <Minimize />
            </CaptionButton>
            <CaptionButton aria-label='Restore'>
              <Maximize />
            </CaptionButton>
            <CaptionButton aria-label='Close'>
              <CloseCaption />
            </CaptionButton>
          </CaptionButtons>
        </TitleBar>

        <MenuBar>
          {['File', 'Edit', 'View', 'Go', 'Link', 'Help'].map((name) => (
            <MenuItem key={name}>{name}</MenuItem>
          ))}
        </MenuBar>

        <Toolbar>
          {toolGroups.map((group, i) => (
            <React.Fragment key={i}>
              {group.map(([name, icon]) => (
                <ToolButton key={name} aria-label={name}>
                  {icon}
                </ToolButton>
              ))}
              <ToolSeparator />
            </React.Fragment>
          ))}
          <HelpButton aria-label='Help topics'>
            <HelpIcon />
            <Triangle w={5} color='#000' />
          </HelpButton>
        </Toolbar>

        <Workspace>
          <Pane>
            <PaneHeader>
              <PaneTitle>Navigation Pane</PaneTitle>
              <IconButton aria-label='Close navigation pane'>
                <CloseGlyph />
              </IconButton>
            </PaneHeader>
            <PaneToolbar>
              <NewButton disabled>
                <PlugIcon />
                New
                <Triangle w={5} color='#9a9aa4' />
              </NewButton>
              <ToolSeparator />
              <IconButton aria-label='Delete'>
                <DeleteIcon />
              </IconButton>
            </PaneToolbar>
            <TreeView label='Navigation' items={navTree} initial='Protocol 1' />
            <Categories items={navCategories} />
          </Pane>

          <Pane>
            <EditorHeader>
              <EditorTitle>Communications - Network - Protocol 1</EditorTitle>
              <span>Port 5</span>
              <IconButton aria-label='Next item'>
                <ArrowDisc size={14} turn={-90} />
              </IconButton>
              <IconButton aria-label='Previous item'>
                <ArrowDisc size={14} turn={90} />
              </IconButton>
            </EditorHeader>
            <EditorBody>
              <SectionTitle>Driver Selection</SectionTitle>
              <DriverRow>
                <DriverLabel htmlFor='driver'>Driver:</DriverLabel>
                <DriverInput id='driver' readOnly value='No Driver Selected' />
                <PickButton onClick={() => setPickerOpen(true)}>Pick...</PickButton>
              </DriverRow>
              <SectionTitle>Port Commands</SectionTitle>
              <Commands>
                <CommandLink href='#delete'>Delete Network Port</CommandLink>
                <CommandLink href='#clear' $disabled>
                  Clear Port Settings
                </CommandLink>
                <CommandLink href='#add' $disabled>
                  Add Additional Device
                </CommandLink>
              </Commands>
            </EditorBody>
          </Pane>

          <Pane>
            <PaneHeader>
              <PaneTitle>Resource Pane</PaneTitle>
              <IconButton aria-label='Close resource pane'>
                <CloseGlyph />
              </IconButton>
            </PaneHeader>
            <PaneToolbar>
              <IconButton aria-label='Find resource'>
                <SearchIcon />
              </IconButton>
            </PaneToolbar>
            <TreeView label='Resources' items={resourceTree} />
            <Categories items={resourceCategories} />
          </Pane>
        </Workspace>

        <StatusBar>
          <StatusText>Port Number 5</StatusText>
          {['Errors', 'Circular', 'Translate', 'READ', 'CAPS'].map((flag) => (
            <StatusFlag key={flag}>{flag}</StatusFlag>
          ))}
          <StatusFlag $on>NUM</StatusFlag>
        </StatusBar>

        {pickerOpen && <DriverPicker onClose={() => setPickerOpen(false)} />}
      </Window>
    </>
  );
};

export default App;
